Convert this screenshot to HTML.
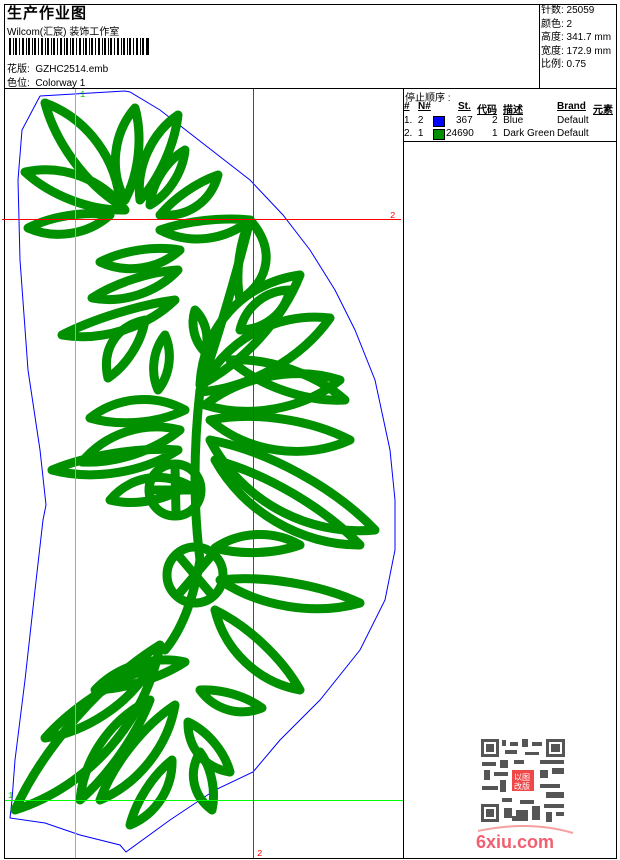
<!DOCTYPE html>
<html><head><meta charset="utf-8"><style>
body{margin:0;width:620px;height:860px;background:#fff;position:relative;overflow:hidden;font-family:"Liberation Sans","WenQuanYi Zen Hei",sans-serif;font-size:10px;color:#000}
.a{position:absolute;white-space:nowrap}
</style></head><body>
<svg class="a" style="left:0;top:0" width="620" height="860">
<g stroke="#000" stroke-width="1" fill="none">
<rect x="4.5" y="4.5" width="612" height="854"/>
<line x1="4" y1="88.5" x2="617" y2="88.5"/>
<line x1="539.5" y1="4" x2="539.5" y2="88"/>
<line x1="403.5" y1="88" x2="403.5" y2="858"/>
<line x1="403" y1="141.5" x2="617" y2="141.5"/>
</g>
<g fill="#000">
<rect x="9" y="38" width="2" height="17"/><rect x="13" y="38" width="1" height="17"/><rect x="15" y="38" width="2" height="17"/><rect x="19" y="38" width="1" height="17"/><rect x="22" y="38" width="2" height="17"/><rect x="26" y="38" width="1" height="17"/><rect x="28" y="38" width="2" height="17"/><rect x="32" y="38" width="1" height="17"/><rect x="34" y="38" width="2" height="17"/><rect x="38" y="38" width="1" height="17"/><rect x="41" y="38" width="2" height="17"/><rect x="45" y="38" width="1" height="17"/><rect x="47" y="38" width="2" height="17"/><rect x="51" y="38" width="1" height="17"/><rect x="53" y="38" width="2" height="17"/><rect x="57" y="38" width="1" height="17"/><rect x="60" y="38" width="2" height="17"/><rect x="64" y="38" width="1" height="17"/><rect x="66" y="38" width="2" height="17"/><rect x="70" y="38" width="1" height="17"/><rect x="72" y="38" width="2" height="17"/><rect x="76" y="38" width="1" height="17"/><rect x="79" y="38" width="2" height="17"/><rect x="83" y="38" width="1" height="17"/><rect x="85" y="38" width="2" height="17"/><rect x="89" y="38" width="1" height="17"/><rect x="91" y="38" width="2" height="17"/><rect x="95" y="38" width="1" height="17"/><rect x="98" y="38" width="2" height="17"/><rect x="102" y="38" width="1" height="17"/><rect x="104" y="38" width="2" height="17"/><rect x="108" y="38" width="1" height="17"/><rect x="110" y="38" width="2" height="17"/><rect x="114" y="38" width="1" height="17"/><rect x="117" y="38" width="2" height="17"/><rect x="121" y="38" width="1" height="17"/><rect x="123" y="38" width="2" height="17"/><rect x="127" y="38" width="1" height="17"/><rect x="129" y="38" width="2" height="17"/><rect x="133" y="38" width="1" height="17"/><rect x="136" y="38" width="2" height="17"/><rect x="140" y="38" width="1" height="17"/><rect x="142" y="38" width="2" height="17"/><rect x="146" y="38" width="3" height="17"/>
</g>
<polyline fill="none" stroke="#0000ff" stroke-width="1" points="40,96 125,91 130,92 160,110 205,145 250,180 283,215 310,250 335,290 355,330 375,380 390,450 395,500 395,550 385,600 360,650 320,700 280,740 253,772 215,790 170,820 126,852 120,845 80,835 45,823 10,818 12,800 15,760 25,680 35,590 43,520 46,505 40,450 28,370 20,260 18,180 22,130 40,96"/>
<g id="emb" fill="none" stroke="#009000" stroke-width="9" stroke-linejoin="round" stroke-linecap="round">
<circle cx="175" cy="490" r="26"/>
<circle cx="195" cy="575" r="28"/>
<path d="M250,220 Q230,300 200,390 Q190,480 200,560 Q190,620 165,650"/>
</g>
<line x1="75.5" y1="89" x2="75.5" y2="858" stroke="#7fb0d8" stroke-width="1"/>
<line x1="5" y1="800.5" x2="403" y2="800.5" stroke="#00ff00" stroke-width="1"/>
<line x1="253.5" y1="89" x2="253.5" y2="858" stroke="#ff0000" stroke-width="1"/>
<line x1="2" y1="219.5" x2="401" y2="219.5" stroke="#ff0000" stroke-width="1"/>
<text x="80" y="97" fill="#00c000" font-size="9" font-family="Liberation Mono">1</text>
<text x="8" y="798" fill="#00c000" font-size="9" font-family="Liberation Mono">1</text>
<text x="390" y="218" fill="#ff0000" font-size="9" font-family="Liberation Mono">2</text>
<text x="257" y="856" fill="#ff0000" font-size="9" font-family="Liberation Mono">2</text>
<g fill="#555">
<rect x="481" y="739" width="18" height="18"/><rect x="484" y="742" width="12" height="12" fill="#fff"/><rect x="486" y="744" width="8" height="8"/>
<rect x="546" y="739" width="19" height="18"/><rect x="549" y="742" width="13" height="12" fill="#fff"/><rect x="551" y="744" width="9" height="8"/>
<rect x="481" y="804" width="18" height="18"/><rect x="484" y="807" width="12" height="12" fill="#fff"/><rect x="486" y="809" width="8" height="8"/>
<rect x="502" y="740" width="4" height="6"/><rect x="510" y="742" width="8" height="4"/><rect x="522" y="739" width="6" height="8"/><rect x="532" y="742" width="10" height="4"/>
<rect x="505" y="750" width="12" height="4"/><rect x="525" y="752" width="14" height="3"/><rect x="482" y="762" width="14" height="4"/><rect x="500" y="760" width="8" height="8"/>
<rect x="514" y="760" width="10" height="4"/><rect x="540" y="760" width="24" height="4"/><rect x="484" y="770" width="6" height="10"/><rect x="494" y="772" width="14" height="4"/>
<rect x="540" y="770" width="8" height="8"/><rect x="552" y="768" width="12" height="6"/><rect x="482" y="786" width="16" height="4"/><rect x="500" y="780" width="6" height="12"/>
<rect x="540" y="784" width="20" height="4"/><rect x="546" y="792" width="18" height="6"/><rect x="502" y="798" width="10" height="4"/><rect x="520" y="800" width="14" height="4"/>
<rect x="504" y="808" width="8" height="10"/><rect x="516" y="810" width="12" height="6"/><rect x="532" y="806" width="8" height="14"/><rect x="544" y="804" width="20" height="4"/>
<rect x="546" y="812" width="6" height="10"/><rect x="556" y="812" width="8" height="4"/><rect x="512" y="816" width="16" height="5"/>
</g>
<rect x="512" y="770" width="22" height="21" fill="#f04848"/>
<text x="514" y="780" fill="#fff" font-size="8">以图</text>
<text x="514" y="789" fill="#fff" font-size="8">改版</text>
<path d="M478,831 Q530,820 573,833" stroke="#f4a0a0" stroke-width="2" fill="none"/>
<text x="476" y="848" fill="#f06070" font-size="18" font-weight="bold" font-family="Liberation Sans">6xiu.com</text>
</svg>
<script>
var L=[
[120,205,45,103,40,5],[125,200,135,108,30,-4],[140,200,178,115,26,-4],[150,205,185,150,20,0],[160,215,218,175,24,6],
[110,215,28,228,24,-4],[125,210,25,172,34,4],
[250,220,160,230,24,-6],[250,220,240,300,36,-10],
[180,250,100,262,24,-4],[178,270,92,298,22,-4],[175,300,62,335,24,-6],[145,320,108,378,30,6],[165,335,158,390,20,0],[195,310,205,352,16,0],
[200,385,300,275,54,-10],[200,392,330,318,54,-6],[205,405,340,380,44,0],[210,420,350,440,42,6],[210,440,375,530,56,10],[215,460,360,545,44,8],
[240,330,290,290,30,0],[230,360,345,400,30,0],
[185,410,90,418,30,4],[180,430,82,462,32,4],[178,450,52,470,26,-4],[188,485,110,500,30,4],
[215,548,300,545,24,-4],[220,580,360,603,32,4],[215,610,300,690,34,6],
[160,645,15,810,60,-10],[150,668,45,738,28,-4],[185,662,95,690,24,4],[200,690,262,708,22,4],[175,705,100,800,32,-4],[188,722,230,772,26,4],[172,760,130,825,24,-4],[200,752,212,810,24,4],[150,700,80,800,30,6]
];
var g=document.getElementById('emb'),s='';
L.forEach(function(a){var bx=a[0],by=a[1],tx=a[2],ty=a[3],w=a[4],k=a[5];var dx=tx-bx,dy=ty-by,l=Math.hypot(dx,dy),nx=-dy/l,ny=dx/l;
function p(t,o){return (bx+dx*t+nx*o).toFixed(1)+','+(by+dy*t+ny*o).toFixed(1)}
s+='<path d="M'+bx+','+by+' C'+p(.3,w/2+k)+' '+p(.7,w/2+k)+' '+tx+','+ty+' C'+p(.7,-w/2+k)+' '+p(.3,-w/2+k)+' '+bx+','+by+'"/>';
});
g.insertAdjacentHTML('beforeend',s+'<path d="M175,466 L176,514 M151,490 L199,490 M178,555 L212,595 M212,555 L178,595"/>');
</script>
<div class="a" style="left:7px;top:2px;font-size:15px;font-weight:bold;letter-spacing:1px">生产作业图</div>
<div class="a" style="left:7px;top:23px;font-size:10px">Wilcom(汇宸) 装饰工作室</div>
<div class="a" style="left:7px;top:60px">花版:&nbsp; GZHC2514.emb</div>
<div class="a" style="left:7px;top:74px">色位:&nbsp; Colorway 1</div>
<div class="a" style="left:541px;top:4px;line-height:13.5px">针数: 25059<br>颜色: 2<br>高度: 341.7 mm<br>宽度: 172.9 mm<br>比例: 0.75</div>
<div class="a" style="left:405px;top:89px">停止顺序 :</div>
<div class="a" style="left:404px;top:101px;font-weight:bold;text-decoration:underline">#</div>
<div class="a" style="left:418px;top:101px;font-weight:bold;text-decoration:underline">N#</div>
<div class="a" style="left:458px;top:101px;font-weight:bold;text-decoration:underline">St.</div>
<div class="a" style="left:477px;top:101px;font-weight:bold;text-decoration:underline">代码</div>
<div class="a" style="left:503px;top:101px;font-weight:bold;text-decoration:underline">描述</div>
<div class="a" style="left:557px;top:101px;font-weight:bold;text-decoration:underline">Brand</div>
<div class="a" style="left:593px;top:101px;font-weight:bold;text-decoration:underline">元素</div>
<div class="a" style="left:404px;top:115px">1.&nbsp; 2</div>
<div class="a" style="left:433px;top:116px;width:10px;height:9px;background:#0000ff;border:1px solid #000"></div>
<div class="a" style="left:456px;top:115px">367</div>
<div class="a" style="left:492px;top:115px">2&nbsp; Blue</div>
<div class="a" style="left:557px;top:115px">Default</div>
<div class="a" style="left:404px;top:128px">2.&nbsp; 1</div>
<div class="a" style="left:433px;top:129px;width:10px;height:9px;background:#009000;border:1px solid #000"></div>
<div class="a" style="left:446px;top:128px">24690</div>
<div class="a" style="left:492px;top:128px">1&nbsp; Dark Green</div>
<div class="a" style="left:557px;top:128px">Default</div>
</body></html>
